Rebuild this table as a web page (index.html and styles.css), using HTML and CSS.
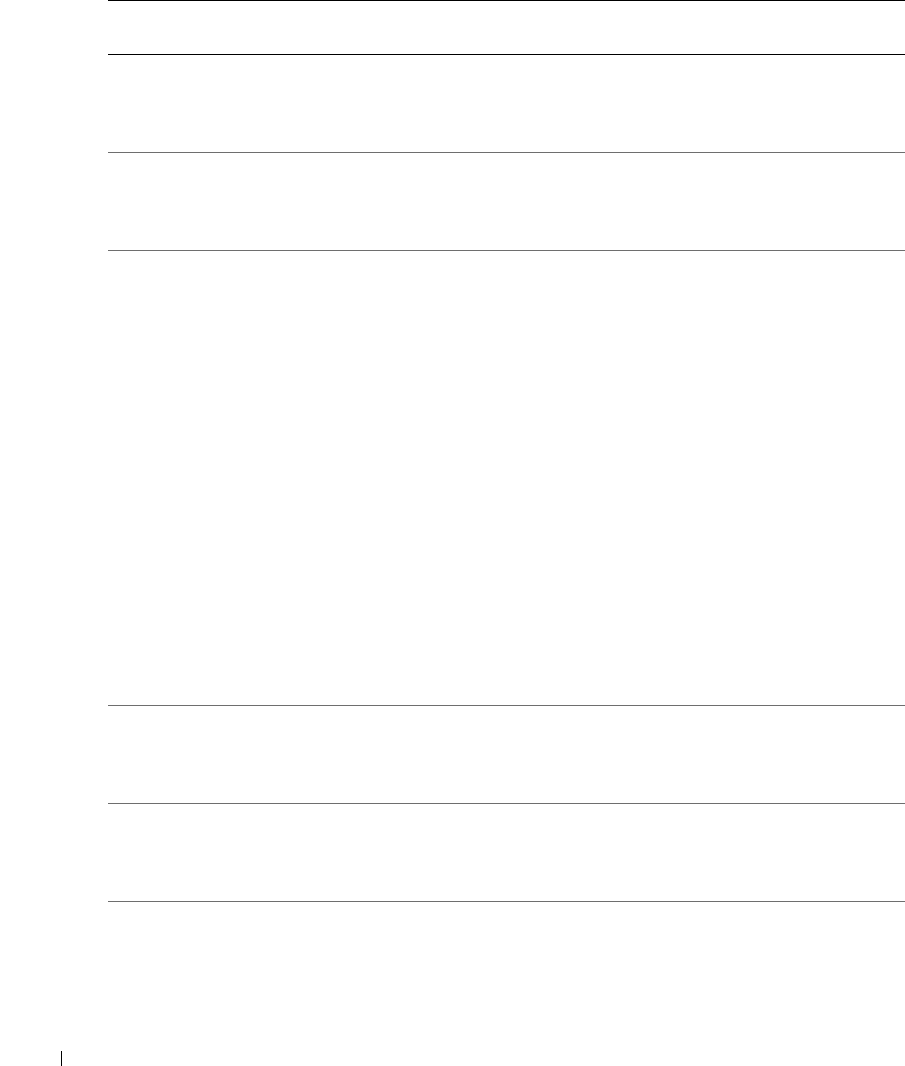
FILE: index.html
```html
<html>
    <head>
        <link rel="stylesheet" href="styles.css">
    </head>
    <body>
        <div id="page">
            <div class="sheet">
                <div class="head"></div>
                <div class="row"></div>
                <div class="row"></div>
                <div class="row tall"></div>
                <div class="row"></div>
                <div class="row"></div>
            </div>
            <div class="footer">
                <span class="bar"></span>
            </div>
        </div>
    </body>
</html>
```

FILE: styles.css
```css
html, body{
    margin: 0;
    padding: 0;
    background: #ffffff;
    overflow: hidden;
}
#page{
    font-family: "Liberation Serif", serif;
}
.sheet{
    margin-left: 108px;
    border-top: solid 1px #000000;
}
.head{
    height: 53px;
    border-bottom: solid 1px #000000;
}
.row{
    height: 97px;
    border-bottom: solid 1px #6e6e6e;
}
.row.tall{
    height: 454px;
}
.footer{
    margin-top: 149px;
    padding-left: 61px;
    height: 15px;
}
.bar{
    display: block;
    width: 1px;
    height: 15px;
    background-color: #000000;
}
```
